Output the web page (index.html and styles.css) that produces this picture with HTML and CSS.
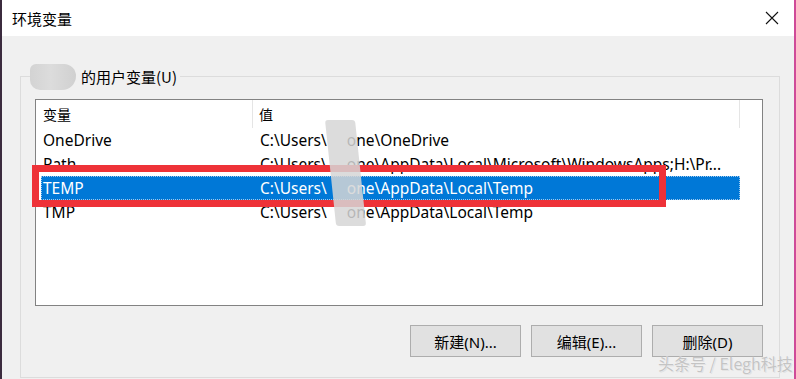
FILE: index.html
```html
<!DOCTYPE html>
<html lang="zh-CN">
<head>
    <meta charset="UTF-8">
    <title>环境变量</title>
    <link rel="stylesheet" href="styles.css">
</head>
<body>
    <div class="window">
        <div class="titlebar">
            <span class="title">环境变量</span>
            <svg class="close" width="14" height="14" viewBox="0 0 14 14">
                <path d="M1 1 L13 13 M13 1 L1 13" stroke="#111" stroke-width="1.1" fill="none"/>
            </svg>
        </div>

        <fieldset class="group">
            <legend class="group-label">
                <span class="blob"></span>
                <span>的用户变量(U)</span>
            </legend>

            <div class="list">
                <div class="list-head">
                    <div class="head-cell first">变量</div>
                    <div class="head-cell second">值</div>
                </div>
                <div class="row">
                    <div class="cell">OneDrive</div>
                    <div class="cell">C:\Users\<span class="hidden-name"></span>one\OneDrive</div>
                </div>
                <div class="row">
                    <div class="cell">Path</div>
                    <div class="cell">C:\Users\<span class="hidden-name"></span>one\AppData\Local\Microsoft\WindowsApps;H:\Pr...</div>
                </div>
                <div class="row selected">
                    <div class="cell">TEMP</div>
                    <div class="cell">C:\Users\<span class="hidden-name"></span>one\AppData\Local\Temp</div>
                </div>
                <div class="row">
                    <div class="cell">TMP</div>
                    <div class="cell">C:\Users\<span class="hidden-name"></span>one\AppData\Local\Temp</div>
                </div>
            </div>

            <div class="buttons">
                <button class="btn">新建(N)...</button>
                <button class="btn">编辑(E)...</button>
                <button class="btn">删除(D)</button>
            </div>
        </fieldset>

        <!-- 标注和打码 -->
        <div class="highlight"></div>
        <div class="smear"></div>
        <div class="watermark">头条号 / Elegh科技</div>
    </div>
</body>
</html>
```

FILE: styles.css
```css
* {
    margin: 0;
    padding: 0;
    box-sizing: border-box;
}

body {
    width: 796px;
    height: 379px;
    overflow: hidden;
    background: #f0f0f0;
    font-family: 'Segoe UI', 'Noto Sans', 'Noto Sans CJK SC', sans-serif;
    font-size: 15.5px;
    color: #000;
}

.window {
    position: relative;
    height: 379px;
    background: #f0f0f0;
    border-left: 2px solid #3b2b3e;
    border-right: 2px solid #cf4a98;
}

.titlebar {
    height: 36px;
    background: #fff;
    display: flex;
    align-items: center;
    justify-content: space-between;
    padding: 0 15px 0 10px;
}

.title {
    font-size: 15px;
    font-family: 'Noto Sans CJK SC', sans-serif;
}

.close {
    display: block;
}

.group {
    margin: 27px 0 0 18px;
    width: 760px;
    height: 315px;
    border: 1px solid #dcdcdc;
    padding: 0;
}

.group-label {
    display: flex;
    align-items: center;
    gap: 5px;
    margin-left: 9px;
    padding-right: 3px;
    height: 27px;
    font-size: 15px;
    font-family: 'Noto Sans CJK SC', sans-serif;
}

.blob {
    display: block;
    width: 46px;
    height: 26px;
    border-radius: 6px 12px 14px 10px;
    background: linear-gradient(90deg, #d3d3d3 0%, #dcdcdc 45%, #d0d0d0 100%);
}

.list {
    margin: 9px 0 0 14px;
    width: 728px;
    height: 207px;
    background: #fff;
    border: 1px solid #828282;
}

.list-head {
    display: flex;
    height: 28px;
    align-items: center;
}

.head-cell {
    height: 28px;
    line-height: 28px;
    font-family: 'Noto Sans CJK SC', sans-serif;
    font-size: 14px;
}

.head-cell.first {
    width: 217px;
    padding-left: 7px;
    border-right: 1px solid #e5e5e5;
}

.head-cell.second {
    width: 487px;
    padding-left: 6px;
    border-right: 1px solid #e5e5e5;
}

.row {
    display: grid;
    grid-template-columns: 217px 1fr;
    width: 699px;
    height: 24px;
    margin-left: 5px;
    line-height: 24px;
    white-space: nowrap;
}

.cell {
    padding-left: 2px;
    overflow: hidden;
}

.row.selected {
    background: #0078d7;
    color: #fff;
    outline: 1px dotted #9ec9ee;
    outline-offset: -1px;
}

.hidden-name {
    display: inline-block;
    width: 20px;
}

.buttons {
    display: flex;
    justify-content: flex-end;
    gap: 10px;
    width: 728px;
    margin: 19px 0 0 14px;
}

.btn {
    width: 111px;
    height: 32px;
    background: #e1e1e1;
    border: 1px solid #adadad;
    font-family: 'Segoe UI', 'Noto Sans', 'Noto Sans CJK SC', sans-serif;
    font-size: 15px;
    color: #000;
}

.highlight {
    position: absolute;
    left: 30px;
    top: 165px;
    width: 634px;
    height: 42px;
    border: 7px solid #ee3238;
}

.smear {
    position: absolute;
    left: 323px;
    top: 120px;
    width: 30px;
    height: 106px;
    background: rgba(214, 214, 214, 0.85);
    transform: skewX(6deg);
    transform-origin: top left;
    border-radius: 3px;
}

.watermark {
    position: absolute;
    left: 656px;
    top: 351px;
    font-family: 'Noto Sans CJK SC', sans-serif;
    font-size: 16px;
    color: #c4c4c4;
    text-shadow: 0 0 1px #fff, 1px 1px 0 #e2e2e2;
    white-space: nowrap;
}
```
